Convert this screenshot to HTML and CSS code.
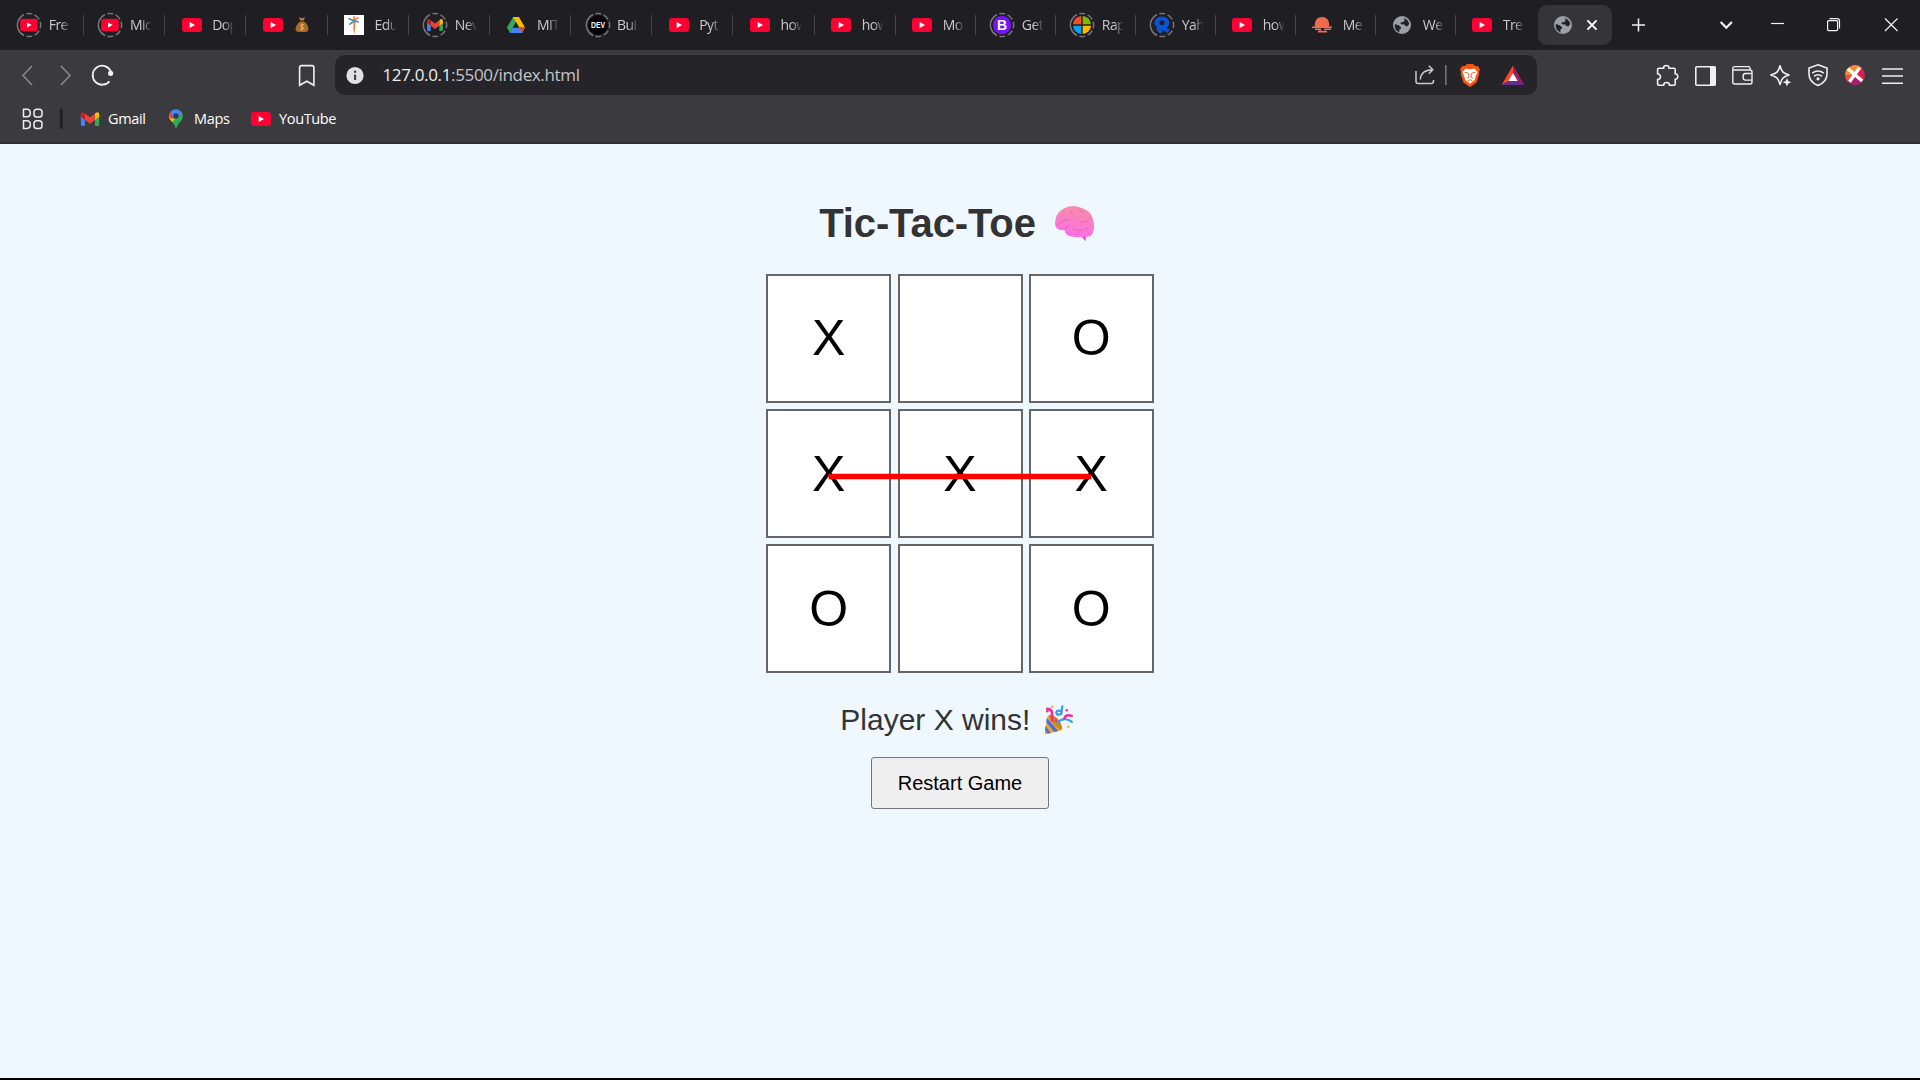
FILE: index.html
```html
<!DOCTYPE html>
<html lang="en">
<head>
<meta charset="utf-8">
<title>Tic-Tac-Toe</title>
<link rel="stylesheet" href="styles.css">
</head>
<body>
<svg class="defs" width="0" height="0">
  <defs>
    <g id="ring"><circle r="11.6" fill="none" stroke="#77767a" stroke-width="1.5" pathLength="100" stroke-dasharray="36 3.5 8 3.5 9 3.5 9 3.5 9 3.5 8 3.5" transform="rotate(115)"/></g>
    <g id="yt"><rect x="-10" y="-7" width="20" height="14" rx="3" fill="#ff0033"/><path d="M-2.3-2.9V2.9L3 0z" fill="#fff"/></g>
    <g id="gmail">
      <path d="M-9.2-4V5.5Q-9.2 7-7.7 7H-5V-1z" fill="#4285f4"/>
      <path d="M9.2-4V5.5Q9.2 7 7.7 7H5V-1z" fill="#34a853"/>
      <path d="M5-5.5L6.5-6.6Q9.2-7.6 9.2-4.6V-2.2L5 1z" fill="#fbbc04"/>
      <path d="M-5-5.5L0-1.7L5-5.5V1L0 4.7L-5 1z" fill="#ea4335"/>
      <path d="M-5-5.5L-6.5-6.6Q-9.2-7.6-9.2-4.6V-2.2L-5 1z" fill="#c5221f"/>
    </g>
    <g id="globe">
      <circle r="9" fill="#9aa0a6"/>
      <path d="M-7-1L-3 .4L-1 2.2V3.6L-2.6 4.4V7.2Q-7 6-7.3 1zM1.6-7Q6.5-5.5 7.2-1L5.5 1.2L3 1L2.6-.5L-1.2-.7L-1.4-2.6L1.3-3L2.8-5z" fill="#232227"/>
    </g>
  </defs>
</svg>

<header class="browser">
  <div class="tabs">
    <div class="tab"><svg class="fav" viewBox="-13 -13 26 26"><use href="#ring"/><use href="#yt" transform="scale(.88)"/></svg><span class="name">Fre</span></div>
    <div class="tab"><svg class="fav" viewBox="-13 -13 26 26"><use href="#ring"/><use href="#yt" transform="scale(.88)"/></svg><span class="name">Mic</span></div>
    <div class="tab plain"><svg class="fav" viewBox="-13 -13 26 26"><use href="#yt"/></svg><span class="name">Dop</span></div>
    <div class="tab plain"><svg class="fav" viewBox="-13 -13 26 26"><use href="#yt"/></svg>
      <svg class="money" viewBox="0 0 16 18"><path d="M5 1L8 2.3L11 1L9.8 4.6H6.2z" fill="#b87a35"/><path d="M6 5.5H10Q14.7 9 14.4 13.5Q14 16 11 16H4.5Q1.5 15.6 1.5 13Q2 8.5 6 5.5z" fill="#a96b2b"/><path d="M6 5.2H10" stroke="#6f451e" stroke-width="1.4"/><path d="M10 8.7Q6.5 7.8 6.5 9.7C6.5 11.3 9.7 10.5 9.7 12.4Q9.3 14 6 13.1M8 7.3V14.7" fill="none" stroke="#ecb25a" stroke-width="1"/></svg></div>
    <div class="tab plain"><svg class="fav" viewBox="-13 -13 26 26"><rect x="-10" y="-10" width="20" height="20" fill="#fff"/><path d="M-.6-8.5L1-9L1.600-3L.9 5L.2 9.500L-.6 5z" fill="#f0803c"/><path d="M-5.500-6.500L0-4.200L4.800-3M-4.600-.4L-.4-3.600" fill="none" stroke="#2f8fc5" stroke-width="1.600"/><path d="M.5-4.500L4.500-7.500" fill="none" stroke="#e86b35" stroke-width="1.200"/></svg><span class="name">Edu</span></div>
    <div class="tab"><svg class="fav" viewBox="-13 -13 26 26"><use href="#ring"/><use href="#gmail" transform="scale(.86)"/></svg><span class="name">New</span></div>
    <div class="tab plain"><svg class="fav" viewBox="-13 -13 26 26"><path d="M-3-8H3L-3.6 3.5L-6 8L-9 2.5z" fill="#34a853"/><path d="M-3-8H3L9 2.5H3.1z" fill="#fbbc04"/><path d="M-3.2 2.6H9L6 8H-6z" fill="#4285f4"/><path d="M3.1 2.6H9L6 8z" fill="#ea4335"/><path d="M0-2.8L3 2.6H-3z" fill="#1f1e23"/></svg><span class="name">MIT</span></div>
    <div class="tab"><svg class="fav" viewBox="-13 -13 26 26"><use href="#ring"/><circle r="9.7" fill="#000"/><text class="dev" y="3.3" text-anchor="middle" textLength="14" lengthAdjust="spacingAndGlyphs">DEV</text></svg><span class="name">Bui</span></div>
    <div class="tab plain"><svg class="fav" viewBox="-13 -13 26 26"><use href="#yt"/></svg><span class="name">Pyt</span></div>
    <div class="tab plain"><svg class="fav" viewBox="-13 -13 26 26"><use href="#yt"/></svg><span class="name">how</span></div>
    <div class="tab plain"><svg class="fav" viewBox="-13 -13 26 26"><use href="#yt"/></svg><span class="name">how</span></div>
    <div class="tab narrow plain"><svg class="fav" viewBox="-13 -13 26 26"><use href="#yt"/></svg><span class="name">Mo</span></div>
    <div class="tab narrow"><svg class="fav" viewBox="-13 -13 26 26"><use href="#ring"/><circle r="9.2" fill="#7415f5"/><text class="letter" y="5" text-anchor="middle">B</text></svg><span class="name">Get</span></div>
    <div class="tab narrow"><svg class="fav" viewBox="-13 -13 26 26"><use href="#ring"/><path d="M-.7-.7V-9A9 9 0 0 0-9-.7z" fill="#f25022"/><path d="M.7-.7V-9A9 9 0 0 1 9-.7z" fill="#7fba00"/><path d="M-.7.7V9A9 9 0 0 1-9 .7z" fill="#00a4ef"/><path d="M.7.7V9A9 9 0 0 0 9 .7z" fill="#ffb900"/></svg><span class="name">Rap</span></div>
    <div class="tab narrow"><svg class="fav" viewBox="-13 -13 26 26"><use href="#ring"/><path d="M-7.5-3Q-6-8.5 0-8.5C8-8 9 0 4.5 3L8 4.5L5.5 8L1 5L-1 8.5Q-6 7.5-5.5 1Q-8.5 0-7.5-3z" fill="#0754d8"/><circle cx="0" cy="-2.3" r="2.5" fill="#1f1e23"/></svg><span class="name">Yah</span></div>
    <div class="tab narrow plain"><svg class="fav" viewBox="-13 -13 26 26"><use href="#yt"/></svg><span class="name">how</span></div>
    <div class="tab narrow plain"><svg class="fav" viewBox="-13 -13 26 26"><path d="M-7.2 2V0Q-7-7.8 0-8Q7-7.8 7.2 0V2z" fill="#ee6c4d"/><path d="M-10 2.2H10M-7 4.2H-1M2 4.2H9M-4 6.6H5M-2 5V6" stroke="#ee6c4d" stroke-width="1.6"/></svg><span class="name">Me</span></div>
    <div class="tab narrow plain"><svg class="fav" viewBox="-13 -13 26 26"><use href="#globe"/></svg><span class="name">We</span></div>
    <div class="tab last plain"><svg class="fav" viewBox="-13 -13 26 26"><use href="#yt"/></svg><span class="name">Tre</span></div>
    <div class="tab active"><svg class="fav" viewBox="-13 -13 26 26"><use href="#globe"/></svg><svg width="12" height="12" viewBox="0 0 12 12"><path d="M1.4 1.4L10.6 10.6M10.6 1.4L1.4 10.6" stroke="#fff" stroke-width="2"/></svg></div>
    <svg class="tools" width="308" height="50" viewBox="1612 0 308 50" fill="none" stroke="#f2f2f2" stroke-width="1.5">
      <path d="M1632 25H1645M1638.5 18.5V31.5"/>
      <path d="M1720.7 22L1726.3 27.7L1731.9 22" stroke-width="2.3"/>
      <path d="M1771 23.5H1784" stroke-width="1.2"/>
      <rect x="1827.6" y="20.6" width="10" height="10" rx="1" stroke-width="1.2"/>
      <path d="M1829.5 18.6H1837Q1839.5 18.6 1839.5 21V28.6" stroke-width="1.2"/>
      <path d="M1885 18.5L1897.5 31M1897.5 18.5L1885 31" stroke-width="1.2"/>
    </svg>
  </div>

  <div class="toolbar">
    <svg class="nav" width="335" height="50" viewBox="0 50 335 50" fill="none" stroke="#f0f0f2" stroke-width="1.6">
      <path d="M32 66L23 75.5L32 85M61 66L70 75.5L61 85" stroke="#88878b"/>
      <path d="M110.8 71.2A9.5 9.5 0 1 0 109.5 81.3" stroke-width="1.8"/>
      <circle cx="110.6" cy="73.3" r="2.6" fill="#f0f0f2" stroke="none"/>
      <path d="M299.6 67.5Q299.6 65.6 301.5 65.6H312Q313.9 65.6 313.9 67.5V85.3L306.8 81.2L299.6 85.3z"/>
    </svg>
    <div class="address">
      <svg width="40" height="40" viewBox="335 55 40 40"><circle cx="355" cy="75.5" r="8.6" fill="#e2e1e8"/><path d="M355.1 74.5V80" stroke="#3b3a40" stroke-width="2"/><circle cx="355.1" cy="71.8" r="1.2" fill="#3b3a40"/></svg>
      <span class="url"><b>127.0.0.1</b>:5500/index.html</span>
      <svg class="actions" width="137" height="40" viewBox="1400 55 137 40" fill="none">
        <path d="M1416 71V81.5Q1416 83.4 1418 83.4H1431.5Q1433.5 83.4 1433.5 81V80M1420.3 79.5Q1421 70 1432.5 69.8M1428.8 65.8L1432.8 69.8L1428.8 73.8" stroke="#c9c8cd" stroke-width="1.5"/>
        <path d="M1445.8 65V85" stroke="#737277" stroke-width="1.6"/>
        <path d="M1465 66L1467 64H1473L1475 66H1477.5L1480 69L1479 72L1479.3 74L1476.5 82.5L1470 87L1463.5 82.5L1460.7 74L1461 72L1460 69L1462.5 66z" fill="#fb5411"/>
        <path d="M1465.5 68.500L1470 69.200L1474.500 68.500L1477.500 72L1475.500 77L1474.800 80L1470 83.700L1465.200 80L1464.500 77L1462.500 72z" fill="#fff"/>
        <path d="M1464.500 72.200L1468 73M1475.500 72.200L1472 73M1468.600 73L1469 77.200L1467 78.300M1471.400 73L1471 77.200L1473 78.300M1467.500 80.800L1470 79.600L1472.500 80.800" stroke="#fb5411" stroke-width=".9"/>
        <path d="M1513 65.5L1501.5 85L1508.5 81L1513 73z" fill="#ff4724"/><path d="M1513 65.5L1524.5 85L1517.5 81L1513 73z" fill="#9e1f63"/><path d="M1501.5 85H1524.5L1517.5 81H1508.5z" fill="#662d91"/><path d="M1513 73L1517.7 81H1508.3z" fill="#fff"/>
      </svg>
    </div>
    <svg class="extensions" width="272" height="50" viewBox="1648 50 272 50" fill="none" stroke="#f0f0f2" stroke-width="1.6">
      <path d="M1658.2 68.2H1663.6C1663 64.6 1669.6 64.6 1669 68.2H1674Q1675.2 68.2 1675.2 69.5V73.8C1678.6 73.6 1678.6 79.6 1675.2 79.4V84Q1675.2 85.2 1674 85.2H1669.5C1669.3 81.6 1664 81.6 1663.6 85.2H1658.8Q1657.6 85.2 1657.6 84V79.6C1661.4 79.4 1661.4 74.2 1657.6 73.8V69.3Q1657.6 68.2 1658.8 68.2z"/>
      <rect x="1695.8" y="66.8" width="19.4" height="18.4" rx="1"/><path d="M1710 66.5H1715.3V85.5H1710z" fill="#f0f0f2" stroke="none"/>
      <path d="M1750 70V68.3Q1750 66.6 1748.3 66.6H1735Q1732.8 66.6 1732.8 68.5V82Q1732.8 84 1734.8 84H1750Q1752 84 1752 82V72Q1752 70 1750 70H1733.5M1752 73.5H1745.3Q1743 73.5 1743 76.8Q1743 80.1 1745.3 80.1H1752" stroke-width="1.4"/>
      <path d="M1780 65.7C1782 72.5 1783 73 1789 75C1783 77 1782 78 1780 84.5C1778 78 1777 77 1770.8 75C1777 73 1778 72.5 1780 65.7z" stroke-linejoin="round"/><path d="M1787 78L1788.2 81L1791.3 82.2L1788.2 83.4L1787 86.5L1785.8 83.4L1782.7 82.2L1785.8 81z" fill="#f0f0f2" stroke="none"/>
      <path d="M1818 64.8L1827 68V74Q1827 82 1818 85.5Q1809 82 1809 74V68z"/><path d="M1812.2 73.2Q1818 68.7 1823.8 73.2M1814 76.4Q1818 73.2 1822 76.4" stroke-width="1.5"/><circle cx="1818" cy="78.8" r="1.6" fill="#f0f0f2" stroke="none"/>
      <g stroke="none"><circle cx="1855" cy="75" r="10" fill="#d6204e"/><path d="M1845 75A10 10 0 0 1 1862 68L1855 75z" fill="#f68b34"/><path d="M1855 75L1845 75A10 10 0 0 0 1848 82z" fill="#ef4c3a"/><path d="M1855 75L1862 82A10 10 0 0 1 1848 82z" fill="#a91b6d"/></g>
      <path d="M1848 68.800L1862.200 81M1859.500 67.800L1849.500 81.800" stroke="#fff" stroke-width="3.400"/>
      <path d="M1882 69H1903M1882 76H1903M1882 83.2H1903"/>
    </svg>
  </div>

  <nav class="bookmarks">
    <svg width="70" height="42" viewBox="0 100 70 42" fill="none" stroke="#eeeef0" stroke-width="1.5"><path d="M23.5 109.2H27Q30.3 109.2 30.3 113Q30.3 116.8 27 116.8H23.5zM23.5 120.8H27Q30.3 120.8 30.3 124.6Q30.3 128.4 27 128.4H23.5z"/><rect x="34" y="109.2" width="8" height="7.8" rx="2.8"/><rect x="34" y="120.8" width="8" height="7.8" rx="2.8"/><path d="M61.3 110V127.5" stroke="#222126" stroke-width="3" stroke-linecap="round"/></svg>
    <a class="bm gmail"><svg width="20" height="20" viewBox="-10 -10 20 20"><use href="#gmail"/></svg>Gmail</a>
    <a class="bm maps"><svg width="16" height="20" viewBox="0 0 16 20"><path d="M8 .5A7 7 0 0 1 14.8 6Q15.5 9.8 11.8 13.2Q9.5 15.6 8.4 19.2H7.6Q7 15.8 4.2 13Q.7 9.8 1 7A7 7 0 0 1 8 .5z" fill="#34a853"/><path d="M1 7Q.9 10 4.2 13L10.5 6.5L3 3.2z" fill="#fbbc04"/><path d="M1 7Q1.1 4.5 2.7 2.8L7 6.4L3.3 10z" fill="#ea4335"/><path d="M2.7 2.8A7 7 0 0 1 14.2 4.2L5.6 10.5z" fill="#4285f4"/><circle cx="8" cy="7" r="2.7" fill="#2d3a58"/></svg>Maps</a>
    <a class="bm youtube"><svg width="20" height="20" viewBox="-10 -10 20 20"><use href="#yt"/></svg>YouTube</a>
  </nav>
</header>

<main class="game">
  <h1 class="title"><span>Tic-Tac-Toe&nbsp;</span><svg width="54" height="46" viewBox="1047.2 200 54 46">
    <defs><linearGradient id="pink" x1=".6" y1="0" x2=".4" y2="1"><stop offset="0" stop-color="#f58fa4"/><stop offset="1" stop-color="#ff6cec"/></linearGradient></defs>
    <path d="M1080 235L1086 241.300L1086 233z" fill="#fb45bd"/>
    <path d="M1055.2 224Q1055 214 1063 209Q1072 203.500 1082 208Q1090 210.500 1092.500 217Q1096 226 1093 233Q1091 237.500 1086 236.500Q1079 237.500 1072 236.500Q1066 236 1064.500 230Q1056 231 1055.200 224z" fill="url(#pink)"/>
    <path d="M1057 226Q1062 219.500 1070 219.500M1072 210Q1069 212 1073 213.500M1078 208Q1079 211 1084 212M1080 222Q1088 223 1090 217M1065 230Q1066 226 1070 225M1073 229Q1081 232 1088 228M1080 230Q1080 234 1076 235" fill="none" stroke="#e667ac" stroke-width=".9"/>
  </svg></h1>
  <div class="board">
    <div class="cell top">X</div><div class="cell top"></div><div class="cell top">O</div>
    <div class="cell">X</div><div class="cell">X</div><div class="cell">X</div>
    <div class="cell">O</div><div class="cell"></div><div class="cell">O</div>
    <svg class="strike" viewBox="766.25 273.75 387.5 398.75"><path d="M828.750 476.200H1091.500" stroke="#f00" stroke-width="5.400"/></svg>
  </div>
  <p class="status"><span>Player X wins!&nbsp;</span><svg width="41" height="34" viewBox="1039.2 702.7 41 34">
    <path d="M1048 715Q1059 717 1062 730L1045.500 734Q1044.500 733.500 1045 732z" fill="#f3a62c"/>
    <path d="M1047 717.500L1058.500 730.800L1054.500 731.800L1046.500 722zM1045.800 725.500L1051 732.600L1048 733.500L1045.300 730z" fill="#4a6fd8"/>
    <path d="M1049 714.500Q1060 715.500 1062.500 728Q1061 731 1057.500 727Q1051 722 1049 714.500z" fill="#c98619"/>
    <path d="M1047.500 708.500Q1053 709 1052.300 714.500V720" fill="none" stroke="#f52f91" stroke-width="2.800" stroke-linecap="round"/>
    <path d="M1058 722Q1064 716 1072 721.500M1062.500 706L1061.500 713.500Q1057 716 1056.500 712Q1057.500 709 1062 711.500" fill="none" stroke="#37a0e8" stroke-width="2.300" stroke-linecap="round"/>
    <path d="M1064.500 718Q1066 713.500 1072 715.500" fill="none" stroke="#f527a0" stroke-width="2.400" stroke-linecap="round"/>
    <g fill="#f52f91"><circle cx="1047.500" cy="711" r="1.300"/><circle cx="1067" cy="710" r="1.300"/><circle cx="1056.200" cy="720.500" r="1.200"/></g>
    <g fill="#f6b944"><circle cx="1052.500" cy="706.500" r="1.400"/><circle cx="1068.500" cy="726.500" r="1.400"/></g>
  </svg></p>
  <button class="restart">Restart Game</button>
</main>
</body>
</html>
```

FILE: styles.css
```css
* { box-sizing: border-box; }
body {
  margin: 0;
  height: 1080px;
  display: flex;
  flex-direction: column;
  overflow: hidden;
  background: #f0f8ff;
  border-bottom: 2px solid #000;
  font-family: "Liberation Sans", Arial, sans-serif;
}
svg { display: block; flex: none; }
.defs { position: absolute; }

.browser {
  flex: none;
  height: 144px;
  background: #3b3a3f;
  border-bottom: 2px solid #302f35;
  font-family: "Open Sans", "Noto Sans", sans-serif;
}
.tabs {
  display: flex;
  height: 50px;
  padding-left: 2.8px;
  background: #1f1e23;
}
.tab {
  position: relative;
  flex: none;
  display: flex;
  align-items: center;
  width: 81.2px;
  padding-left: 13.5px;
}
.tab.narrow { width: 80px; }
.tab.last { width: 81.8px; }
.tab:not(.last):not(.active)::after {
  content: "";
  position: absolute;
  right: 0;
  top: 15px;
  width: 1px;
  height: 20px;
  background: #46454a;
}
.fav { width: 26px; height: 26px; }
.dev {
  fill: #fff;
  font: 700 9px "Liberation Sans", Arial, sans-serif;
}
.letter {
  fill: #fff;
  font: 700 14px "Liberation Sans", Arial, sans-serif;
}
.name {
  margin-left: 6.5px;
  width: 21px;
  overflow: hidden;
  white-space: nowrap;
  font-size: 14px;
  letter-spacing: -0.6px;
  line-height: 22px;
  color: #cac9cc;
  -webkit-mask-image: linear-gradient(90deg, #000 55%, rgba(0, 0, 0, 0.1));
  mask-image: linear-gradient(90deg, #000 55%, rgba(0, 0, 0, 0.1));
}
.plain .name { margin-left: 7.5px; }
.money { width: 16px; height: 18px; margin-left: 8.5px; }
.tab.active {
  width: 74px;
  height: 40px;
  margin-top: 5px;
  padding-left: 12px;
  gap: 10.5px;
  border-radius: 9px;
  background: #353439;
}

.toolbar { display: flex; align-items: center; height: 50px; }
.address {
  flex: none;
  display: flex;
  align-items: center;
  width: 1202px;
  height: 40px;
  border-radius: 10px;
  background: #252429;
}
.extensions { margin-left: auto; }
.url {
  margin-left: 7.5px;
  font-size: 17px;
  letter-spacing: -0.35px;
  line-height: 24px;
  color: #c6c5c9;
}
.url b { font-weight: 400; color: #eeeef0; }
.actions { margin-left: auto; }

.bookmarks { display: flex; align-items: center; height: 42px; padding-bottom: 4px; }
.bookmarks > svg { margin-top: 4px; }
.bm {
  display: flex;
  align-items: center;
  color: #fff;
  font-size: 14.5px;
  letter-spacing: -0.35px;
  line-height: 22px;
}
.gmail { width: 88px; margin-left: 10px; gap: 8px; }
.maps { width: 73px; gap: 10px; }
.youtube { gap: 8px; margin-left: 10px; }

.game {
  display: flex;
  flex-direction: column;
  align-items: center;
  padding-top: 55.5px;
  color: #333;
}
.title {
  display: flex;
  margin: 0 0 28.25px;
  font-size: 40px;
  letter-spacing: -0.1px;
  line-height: 46px;
  font-weight: 700;
}
.board {
  position: relative;
  display: grid;
  grid-template-columns: repeat(3, 125px);
  grid-template-rows: repeat(3, 128.75px);
  gap: 6.25px;
}
.cell {
  display: flex;
  align-items: center;
  justify-content: center;
  padding-top: 1px;
  border: 2px solid #666;
  background: #fff;
  color: #000;
  font-size: 50px;
  line-height: 58px;
}
.cell.top { padding-top: 0; padding-bottom: 1px; }
.strike { position: absolute; inset: 0; width: 100%; height: 100%; }
.status {
  display: flex;
  margin: 30px 0 20.5px;
  font-size: 30px;
  line-height: 34px;
}
.restart {
  width: 178px;
  height: 52px;
  padding: 0;
  border: 1px solid #767676;
  border-radius: 3px;
  background: #efefef;
  color: #000;
  font-family: inherit;
  font-size: 20px;
}
```
